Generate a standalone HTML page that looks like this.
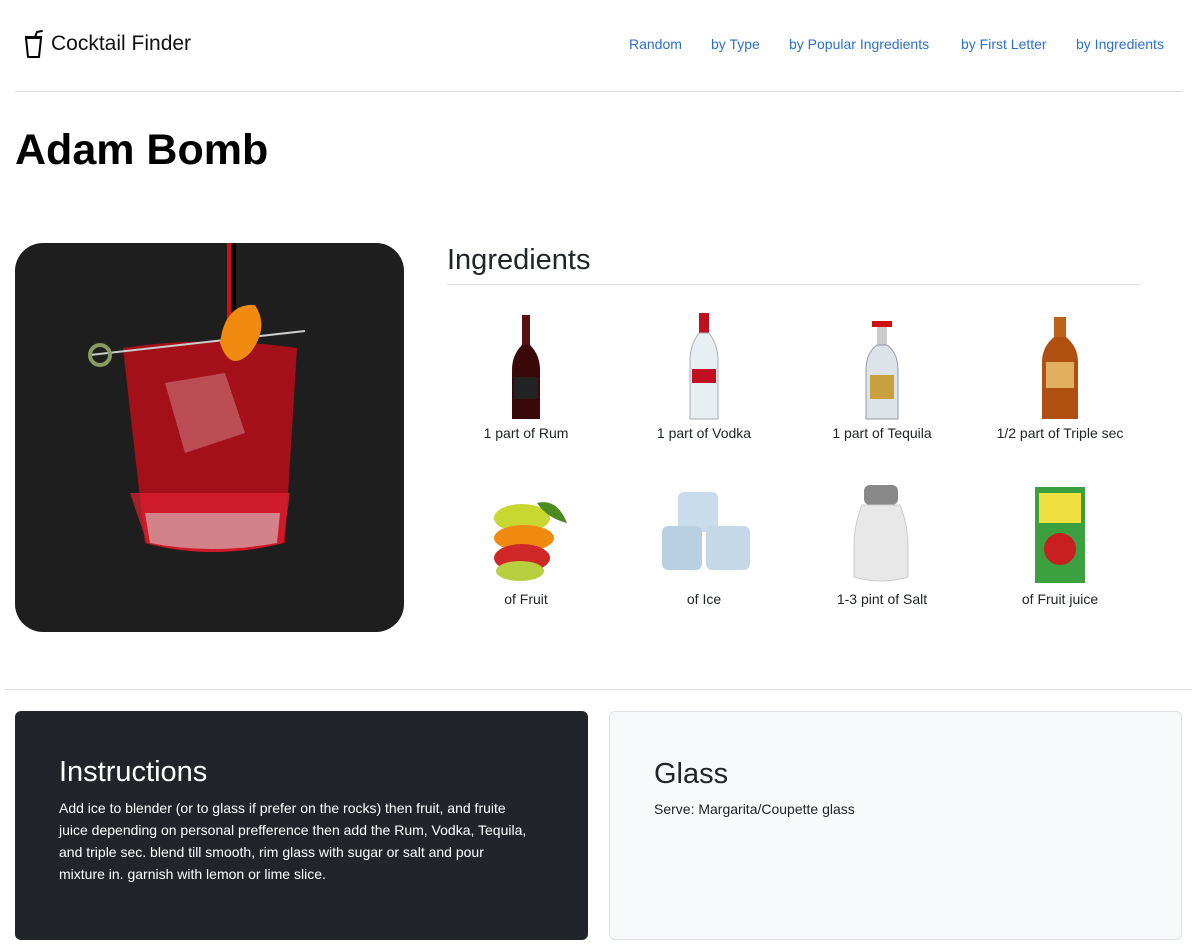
<!DOCTYPE html>
<html><head><meta charset="utf-8"><style>
*{margin:0;padding:0;box-sizing:border-box}
body{width:1192px;height:948px;background:#fff;font-family:"Liberation Sans","DejaVu Sans",sans-serif;color:#212529;position:relative;overflow:hidden}
.a{position:absolute}
.nav a{position:absolute;top:36px;font-size:14px;color:#2a6fd6;text-decoration:none}
.cap{position:absolute;width:178px;text-align:center;font-size:14px;color:#212529}
.ico{position:absolute}
</style></head><body>
<svg class="a" style="left:23px;top:29px" width="22" height="30" viewBox="0 0 22 30"><path d="M2 8h17" stroke="#000" stroke-width="2"/><path d="M3 9h15l-2 19H5z" fill="none" stroke="#000" stroke-width="2" stroke-linejoin="round"/><path d="M12 8L14 3l5-1" fill="none" stroke="#000" stroke-width="2" stroke-linecap="round"/></svg>
<div class="a" style="left:51px;top:32px;font-size:21px;color:#111">Cocktail Finder</div>
<div class="nav"><a style="left:629px">Random</a><a style="left:711px">by Type</a><a style="left:789px">by Popular Ingredients</a><a style="left:961px">by First Letter</a><a style="left:1076px">by Ingredients</a></div>
<div class="a" style="left:15px;top:91px;width:1167px;height:1px;background:#ddd"></div>
<div class="a" style="left:15px;top:126px;font-size:43px;font-weight:bold;color:#000">Adam Bomb</div>
<div class="a" style="left:15px;top:243px;width:389px;height:389px;border-radius:28px;background:#1e1e1e;overflow:hidden">
<svg width="389" height="389" viewBox="0 0 389 389">
<rect x="212" y="0" width="4" height="80" fill="#d01010"/><rect x="217" y="0" width="4" height="70" fill="#000"/>
<path d="M108 105 Q190 92 282 105 L270 300 Q195 318 130 300 Z" fill="#a3101a"/>
<path d="M115 250 L275 250 L268 300 Q195 318 132 300Z" fill="#e02030" opacity=".7"/>
<path d="M130 270 L265 270 L262 300 Q195 312 135 300Z" fill="#d8c8cc" opacity=".6"/>
<path d="M150 140 L210 130 L230 190 L170 210Z" fill="#d88a90" opacity=".5"/>
<path d="M75 112 L290 88" stroke="#ccc" stroke-width="2"/>
<circle cx="85" cy="112" r="10" fill="none" stroke="#8a9a60" stroke-width="4"/>
<path d="M205 100 Q210 60 240 62 Q255 85 235 110 Q215 130 205 100Z" fill="#f08a10"/>
</svg></div>
<div class="a" style="left:447px;top:244px;font-size:29px;color:#212529">Ingredients</div>
<div class="a" style="left:447px;top:284px;width:692px;height:1px;background:#ddd"></div>
<svg class="ico" style="left:510px;top:315px" width="32" height="106" viewBox="0 0 32 106"><rect x="12" y="0" width="8" height="30" fill="#5a1010"/><path d="M12 30 Q2 40 2 55 V104 H30 V55 Q30 40 20 30Z" fill="#3a0a0a"/><rect x="4" y="62" width="24" height="22" fill="#222"/></svg>
<svg class="ico" style="left:688px;top:313px" width="32" height="108" viewBox="0 0 32 108"><rect x="11" y="0" width="10" height="20" fill="#c01020"/><path d="M11 20 Q2 32 2 48 V106 H30 V48 Q30 32 21 20Z" fill="#e8eef2" stroke="#aab" /><rect x="4" y="56" width="24" height="14" fill="#c01020"/></svg>
<svg class="ico" style="left:862px;top:315px" width="40" height="106" viewBox="0 0 40 106"><path d="M10 6h20v6H10z" fill="#d01010"/><rect x="15" y="12" width="10" height="18" fill="#ccc"/><path d="M15 30 Q4 38 4 55 V104 H36 V55 Q36 38 25 30Z" fill="#dde3e8" stroke="#99a"/><rect x="8" y="60" width="24" height="24" fill="#c9a040"/></svg>
<svg class="ico" style="left:1038px;top:317px" width="44" height="104" viewBox="0 0 44 104"><rect x="16" y="0" width="12" height="20" fill="#c06018"/><path d="M16 20 Q4 30 4 45 V102 H40 V45 Q40 30 28 20Z" fill="#b05010"/><rect x="8" y="45" width="28" height="26" fill="#e0b060"/></svg>
<div class="cap" style="left:437px;top:425px">1 part of Rum</div>
<div class="cap" style="left:615px;top:425px">1 part of Vodka</div>
<div class="cap" style="left:793px;top:425px">1 part of Tequila</div>
<div class="cap" style="left:971px;top:425px">1/2 part of Triple sec</div>
<svg class="ico" style="left:482px;top:483px" width="90" height="100" viewBox="0 0 90 100"><ellipse cx="40" cy="35" rx="28" ry="14" fill="#c8d830"/><ellipse cx="42" cy="55" rx="30" ry="13" fill="#f08a10"/><ellipse cx="40" cy="75" rx="28" ry="14" fill="#d02828"/><ellipse cx="38" cy="88" rx="24" ry="10" fill="#b8d040"/><path d="M55 20 Q75 15 85 40 Q65 35 55 20Z" fill="#4a8a20"/></svg>
<svg class="ico" style="left:658px;top:488px" width="96" height="88" viewBox="0 0 96 88"><rect x="20" y="4" width="40" height="40" rx="6" fill="#c8dceb"/><rect x="4" y="38" width="40" height="44" rx="6" fill="#b8d0e2"/><rect x="48" y="38" width="44" height="44" rx="6" fill="#c4d8e8"/></svg>
<svg class="ico" style="left:852px;top:485px" width="58" height="98" viewBox="0 0 58 98"><rect x="12" y="0" width="34" height="20" rx="6" fill="#888"/><path d="M10 20 H48 Q56 40 56 60 V92 Q29 100 2 92 V60 Q2 40 10 20Z" fill="#e8e8e8" stroke="#ccc"/></svg>
<svg class="ico" style="left:1035px;top:487px" width="50" height="96" viewBox="0 0 50 96"><rect x="0" y="0" width="50" height="96" fill="#3aa040"/><rect x="4" y="6" width="42" height="30" fill="#f0e040"/><circle cx="25" cy="62" r="16" fill="#c82020"/></svg>
<div class="cap" style="left:437px;top:591px">of Fruit</div>
<div class="cap" style="left:615px;top:591px">of Ice</div>
<div class="cap" style="left:793px;top:591px">1-3 pint of Salt</div>
<div class="cap" style="left:971px;top:591px">of Fruit juice</div>
<div class="a" style="left:5px;top:689px;width:1187px;height:1px;background:#ddd"></div>
<div class="a" style="left:15px;top:711px;width:573px;height:229px;background:#212529;border-radius:6px;color:#fff">
<div class="a" style="left:44px;top:45px;font-size:29px">Instructions</div>
<div class="a" style="left:44px;top:86px;width:470px;font-size:14px;line-height:22px">Add ice to blender (or to glass if prefer on the rocks) then fruit, and fruite juice depending on personal prefference then add the Rum, Vodka, Tequila, and triple sec. blend till smooth, rim glass with sugar or salt and pour mixture in. garnish with lemon or lime slice.</div></div>
<div class="a" style="left:609px;top:711px;width:573px;height:229px;background:#f8f9fa;border:1px solid #dee2e6;border-radius:6px">
<div class="a" style="left:44px;top:46px;font-size:29px">Glass</div>
<div class="a" style="left:44px;top:89px;font-size:14px">Serve: Margarita/Coupette glass</div></div>
</body></html>
